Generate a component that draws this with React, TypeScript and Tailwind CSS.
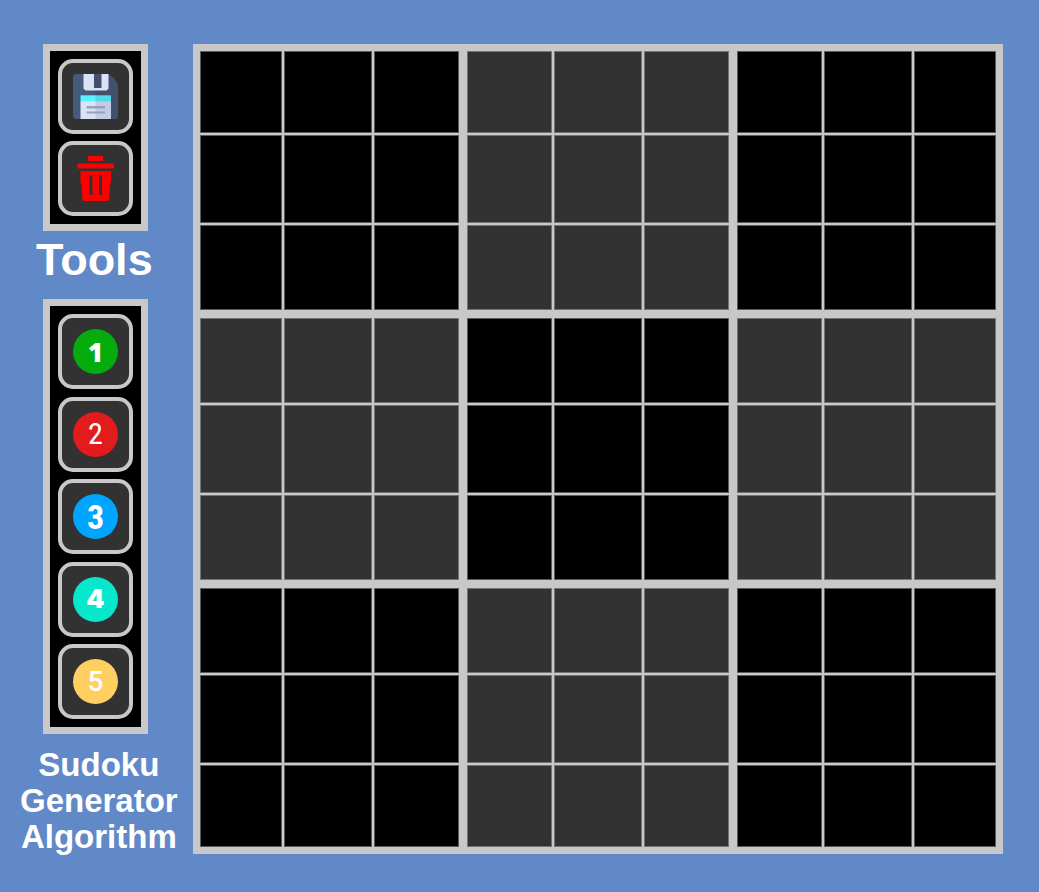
import type { ReactNode } from "react";

const columnTracks = [
  "grid-cols-[82fr_88fr_85fr]",
  "grid-cols-[85fr_88fr_85fr]",
  "grid-cols-[85fr_88fr_82fr]",
];
const rowTracks = [
  "grid-rows-[82fr_88fr_85fr]",
  "grid-rows-[85fr_88fr_85fr]",
  "grid-rows-[85fr_88fr_82fr]",
];

const digits = [
  { value: 1, look: "bg-[#04ad0b] font-['Open_Sans',sans-serif] text-[26px] font-extrabold" },
  { value: 2, look: "bg-[#e21c1c] font-['Roboto_Condensed','Roboto',sans-serif] text-[30px] font-normal" },
  { value: 3, look: "bg-[#00a5ff] font-['Roboto_Condensed','Roboto',sans-serif] text-[34px] font-bold" },
  { value: 4, look: "bg-[#06e8cc] font-['Inter',sans-serif] text-[26px] font-black" },
  { value: 5, look: "bg-[#ffcf62] font-['Roboto',sans-serif] text-[28px] font-medium" },
];

function SaveIcon() {
  return (
    <svg viewBox="0 0 45 45" className="size-[45px]" aria-hidden="true">
      <path d="M2 0H35L41 4.5L45 11V43L43 45H2L0 43V2Z" fill="#465a7c" />
      <path d="M22 0H35L41 4.5L45 11V43L43 45H22Z" fill="#42506d" />
      <path d="M10.5 0H35.5V14.5L33.5 16.5H12.5L10.5 14.5Z" fill="#dbe2f3" />
      <path d="M21 0H28.5V14H21Z" fill="#42506d" />
      <path d="M7.5 27H23V45H7.5Z" fill="#dbe2f3" />
      <path d="M22.5 27H38V45H22.5Z" fill="#c2cce6" />
      <path d="M7.5 21.3H23V27.3H7.5Z" fill="#57f3ff" />
      <path d="M22.5 21.3H38V27.3H22.5Z" fill="#52d9e6" />
      <path d="M13.5 32H32V34.6H13.5ZM13.5 37.6H32V39.6H13.5Z" fill="#98a2b8" />
    </svg>
  );
}

function TrashIcon() {
  return (
    <svg viewBox="0 0 45 45" className="size-[45px]" aria-hidden="true">
      <path d="M15 0H30V5H15ZM4.5 7.5H41V12.5H4.5Z" fill="#ff0000" />
      <path
        fillRule="evenodd"
        d="M7.5 15H38V27H37L36 44L35 45H10.5L9.5 44L8.5 27H7.5ZM16.5 19.5V39H19.5V19.5ZM26 19.5V39H29V19.5Z"
        fill="#ff0000"
      />
    </svg>
  );
}

function ToolButton({ label, children }: { label: string; children: ReactNode }) {
  return (
    <button
      type="button"
      aria-label={label}
      className="flex size-[75px] shrink-0 items-center justify-center rounded-[15px] border-4 border-[#c8c8c8] bg-[#323232]"
    >
      {children}
    </button>
  );
}

function Board() {
  return (
    <main className="grid aspect-square min-w-0 flex-1 grid-cols-[259fr_262fr_259fr] grid-rows-[259fr_262fr_259fr] gap-2 border-[7px] border-[#c8c8c8] bg-[#c8c8c8]">
      {Array.from({ length: 9 }, (_, block) => (
        <div
          key={block}
          className={`grid gap-[2px] ${columnTracks[block % 3]} ${rowTracks[Math.floor(block / 3)]}`}
        >
          {Array.from({ length: 9 }, (_, cell) => (
            <div
              key={cell}
              className={`border ${block % 2 === 0 ? "border-[#5c5c5c] bg-black" : "border-[#747474] bg-[#323232]"}`}
            />
          ))}
        </div>
      ))}
    </main>
  );
}

export default function App() {
  return (
    <div className="flex min-h-screen items-start gap-2 bg-[#6189c7] pt-11 pr-9 pb-9 pl-5 font-['Liberation_Sans',sans-serif] font-bold text-white">
      <aside className="flex w-[165px] shrink-0 flex-col items-start">
        <section
          aria-labelledby="tools-title"
          className="ml-[23px] flex min-h-[187px] flex-col justify-between border-[7px] border-[#c8c8c8] bg-black p-2"
        >
          <ToolButton label="Save">
            <SaveIcon />
          </ToolButton>
          <ToolButton label="Delete">
            <TrashIcon />
          </ToolButton>
        </section>
        <h1 id="tools-title" className="mt-[5px] mb-[15px] ml-4 text-[45px] leading-12">
          Tools
        </h1>
        <section
          aria-label="Digits"
          className="ml-[23px] flex min-h-[435px] flex-col justify-between border-[7px] border-[#c8c8c8] bg-black p-2"
        >
          {digits.map(({ value, look }) => (
            <ToolButton key={value} label={`Digit ${value}`}>
              <span className={`flex size-[45px] items-center justify-center rounded-full leading-none ${look}`}>
                {value}
              </span>
            </ToolButton>
          ))}
        </section>
        <p className="mt-[13px] text-center text-[33px] leading-9">
          Sudoku
          <br />
          Generator
          <br />
          Algorithm
        </p>
      </aside>
      <Board />
    </div>
  );
}
